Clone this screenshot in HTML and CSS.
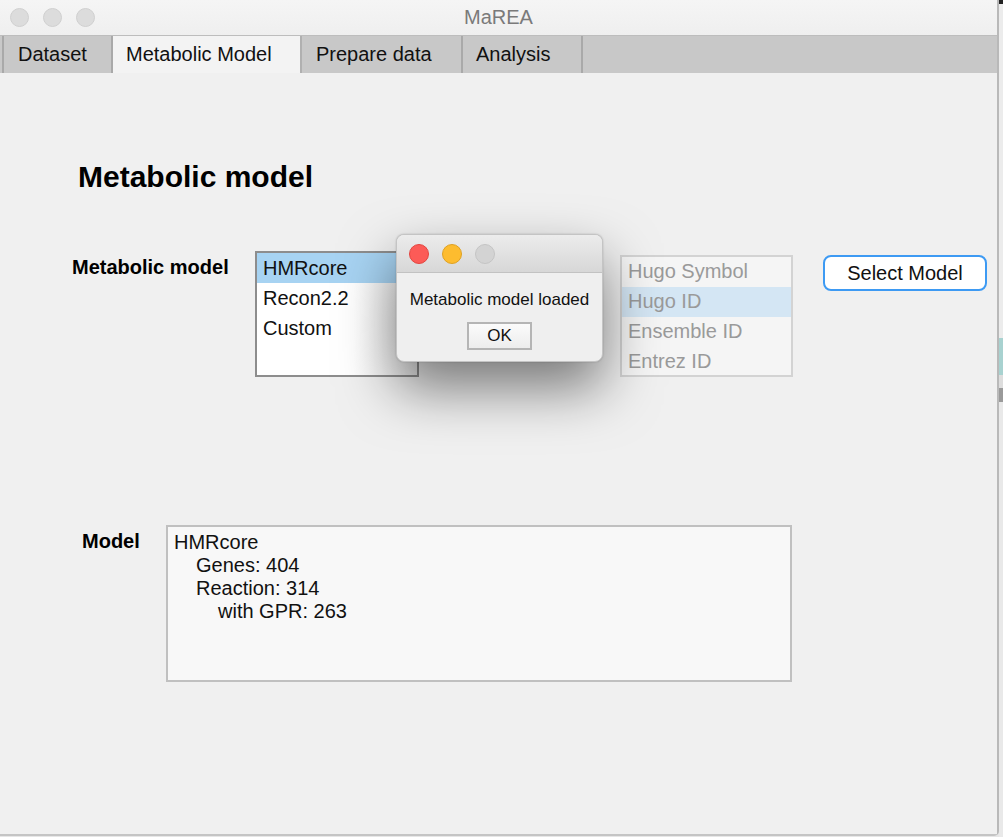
FILE: index.html
```html
<!DOCTYPE html>
<html>
<head>
<meta charset="utf-8">
<title>MaREA</title>
<link rel="stylesheet" href="styles.css">
</head>
<body>
<div class="desktop">
  <div class="window">
    <div class="titlebar">
      <div class="lights">
        <span class="light gray"></span>
        <span class="light gray"></span>
        <span class="light gray"></span>
      </div>
      <div class="title">MaREA</div>
    </div>
    <div class="tabbar">
      <div class="tab tab-dataset">Dataset</div>
      <div class="tab tab-model selected">Metabolic Model</div>
      <div class="tab tab-prepare">Prepare data</div>
      <div class="tab tab-analysis">Analysis</div>
    </div>
    <div class="content">
      <h1 class="heading">Metabolic model</h1>
      <div class="row row-select">
        <div class="label label-model">Metabolic model</div>
        <div class="listbox">
          <div class="item active">HMRcore</div>
          <div class="item">Recon2.2</div>
          <div class="item">Custom</div>
        </div>
        <div class="listbox disabled">
          <div class="item">Hugo Symbol</div>
          <div class="item active">Hugo ID</div>
          <div class="item">Ensemble ID</div>
          <div class="item">Entrez ID</div>
        </div>
        <button class="btn-select">Select Model</button>
      </div>
      <div class="row row-info">
        <div class="label label-info">Model</div>
        <div class="textarea">
          <div class="line l0">HMRcore</div>
          <div class="line l1">Genes: 404</div>
          <div class="line l1">Reaction: 314</div>
          <div class="line l2">with GPR: 263</div>
        </div>
      </div>
      <div class="dialog">
        <div class="dlg-title">
          <span class="light red"></span>
          <span class="light yellow"></span>
          <span class="light off"></span>
        </div>
        <div class="dlg-body">
          <div class="dlg-msg">Metabolic model loaded</div>
          <button class="btn-ok">OK</button>
        </div>
      </div>
    </div>
  </div>
  <div class="behind">
    <div class="behind-corner"></div>
    <div class="behind-gap1"></div>
    <div class="behind-teal"></div>
    <div class="behind-gap2"></div>
    <div class="behind-dark"></div>
  </div>
</div>
</body>
</html>
```

FILE: styles.css
```css
* { box-sizing: border-box; }
html, body { margin: 0; padding: 0; }
body {
  background: #e6e6e6;
  font-family: "Liberation Sans", Arial, sans-serif;
  color: #111;
  width: 1003px;
  height: 837px;
  overflow: hidden;
}
.desktop { display: flex; width: 1003px; height: 837px; }
.window {
  width: 999px;
  height: 836px;
  background: #f0f0f0;
  border-right: 2px solid #b9b9b9;
  border-bottom: 2px solid #c4c4c4;
  border-bottom-right-radius: 5px;
  display: flex;
  flex-direction: column;
  flex: none;
}
.titlebar {
  height: 35px;
  background: linear-gradient(#f5f5f5, #efefef);
  display: flex;
  align-items: center;
  position: relative;
  flex: none;
}
.lights { display: flex; gap: 14px; padding-left: 10px; }
.light {
  width: 19px; height: 19px; border-radius: 50%;
  display: block;
}
.light.gray { background: #dcdcdc; border: 1px solid #d0d0d0; }
.title {
  position: absolute;
  left: 0; right: 0; top: 0;
  text-align: center;
  line-height: 35px;
  font-size: 20px;
  color: #7a7a7a;
}
.tabbar {
  height: 38px;
  background: #c8c8c8;
  border-top: 1px solid #bdbdbd;
  display: flex;
  padding-left: 2px;
  flex: none;
}
.tab {
  font-size: 20px;
  line-height: 37px;
  padding-left: 14px;
  border-right: 2px solid #a9a9a9;
  color: #111;
  background: #c8c8c8;
}
.tab-dataset { width: 111px; border-left: 2px solid #a9a9a9; }
.tab-model { width: 189px; padding-left: 13px; }
.tab-prepare { width: 161px; padding-left: 14px; }
.tab-analysis { width: 120px; padding-left: 13px; }
.tab.selected {
  background: #f3f3f3;
  border-right: 2px solid #b0b0b0;
  height: 38px;
}
.content {
  flex: 1;
  position: relative;
  background: #f0f0f0;
}
.heading {
  margin: 86px 0 0 78px;
  font-size: 30px;
  line-height: 36px;
  font-weight: bold;
  color: #000;
}
.row { display: flex; align-items: flex-start; }
.row-select { margin-top: 56px; padding-left: 72px; }
.label {
  font-weight: bold;
  font-size: 20px;
  line-height: 24px;
  color: #000;
}
.label-model { width: 183px; margin-top: 4px; }
.listbox {
  width: 164px;
  height: 126px;
  border: 2px solid #8d8d8d;
  background: linear-gradient(90deg, #ffffff 60%, #e8e8e8 100%);
}
.item {
  height: 30px;
  font-size: 20px;
  line-height: 30px;
  padding-left: 6px;
  color: #111;
}
.item.active { background: #a7d3f2; }
.listbox.disabled {
  margin-left: 201px;
  margin-top: 4px;
  width: 173px;
  height: 122px;
  border: 2px solid #d3d3d3;
  background: #f5f5f5;
}
.listbox.disabled .item { color: #9a9a9a; height: 30px; line-height: 29px; padding-left: 6px; }
.listbox.disabled .item.active { background: #d4e6f4; }
.btn-select {
  margin-left: 30px;
  margin-top: 4px;
  width: 164px;
  height: 36px;
  border: 2px solid #3d9af3;
  border-radius: 8px;
  background: #ffffff;
  font-family: "Liberation Sans", Arial, sans-serif;
  font-size: 20px;
  color: #111;
  padding: 0;
}
.row-info { margin-top: 148px; padding-left: 82px; }
.label-info { width: 84px; margin-top: 4px; }
.textarea {
  width: 626px;
  height: 157px;
  border: 2px solid #c0c0c0;
  background: #f8f8f8;
  padding: 4px 0 0 6px;
}
.line { font-size: 20px; line-height: 23px; color: #111; }
.l1 { padding-left: 22px; }
.l2 { padding-left: 44px; }
.dialog {
  position: absolute;
  left: 396px;
  top: 161px;
  width: 207px;
  height: 128px;
  background: #efefef;
  border: 1px solid #c4c4c4;
  border-radius: 8px;
  box-shadow: 0 26px 55px rgba(0, 0, 0, 0.5), 0 0 2px rgba(0,0,0,0.2);
  overflow: hidden;
}
.dlg-title {
  height: 38px;
  background: linear-gradient(#ececec, #d7d7d7);
  border-bottom: 1px solid #c2c2c2;
  display: flex;
  align-items: center;
  gap: 13px;
  padding-left: 12px;
}
.dlg-title .light { width: 20px; height: 20px; }
.light.red { background: #fc5b57; border: 1px solid #e2453f; }
.light.yellow { background: #fdbc2f; border: 1px solid #dea123; }
.light.off { background: #d3d3d3; border: 1px solid #c4c4c4; }
.dlg-body {
  display: flex;
  flex-direction: column;
  align-items: center;
}
.dlg-msg {
  font-size: 17px;
  line-height: 20px;
  margin-top: 17px;
  color: #111;
}
.btn-ok {
  margin-top: 12px;
  width: 65px;
  height: 28px;
  border: 2px solid #b5b5b5;
  background: linear-gradient(#fbfbfb, #ededed);
  font-family: "Liberation Sans", Arial, sans-serif;
  font-size: 17px;
  color: #111;
  padding: 0;
}
.behind {
  width: 4px;
  height: 837px;
  background: #e9e9e9;
  display: flex;
  flex-direction: column;
  flex: none;
}
.behind-corner { height: 4px; background: #222; }
.behind-gap1 { height: 334px; background: #ececec; }
.behind-teal { height: 37px; background: #a8d2d0; }
.behind-gap2 { height: 13px; background: #ddd; }
.behind-dark { height: 14px; background: #9a9a9a; }
```
